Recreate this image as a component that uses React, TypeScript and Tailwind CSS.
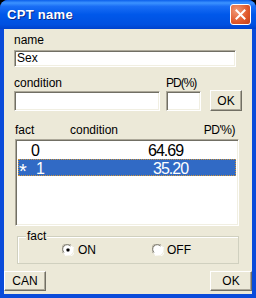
const sunken =
  "bg-white border border-t-[#ACA899] border-l-[#ACA899] border-r-white border-b-white shadow-[inset_1px_1px_0_#716F64,inset_-1px_-1px_0_#F1EFE2]";
const raised =
  "bg-[#ECE9D8] border border-t-white border-l-white border-r-[#716F64] border-b-[#716F64] shadow-[inset_-1px_-1px_0_#ACA899] flex items-center justify-center text-[12px] leading-[14px] text-black";

const Radio = ({ checked }: { checked: boolean }) => (
  <svg width="12" height="12" viewBox="0 0 12 12">
    <circle cx="6" cy="6" r="5.5" fill="white" />
    <path d="M1.2 9.2 A5.3 5.3 0 0 1 9.2 1.2" fill="none" stroke="#ACA899" strokeWidth="1" />
    <path d="M2 8.5 A4.3 4.3 0 0 1 8.5 2" fill="none" stroke="#716F64" strokeWidth="1" />
    <path d="M10.8 2.8 A5.3 5.3 0 0 1 2.8 10.8" fill="none" stroke="white" strokeWidth="1" />
    {checked && <rect x="4.5" y="4.5" width="3" height="3" rx="0.8" fill="black" />}
  </svg>
);

export default function App() {
  return (
    <div className="w-[256px] h-[298px] bg-black font-['Liberation_Sans',Arial,sans-serif]">
      <div className="flex h-full flex-col overflow-hidden rounded-t-[8px] bg-[#0A4BDA]">
        {/* title bar */}
        <div className="flex h-[29px] shrink-0 items-center justify-between bg-[linear-gradient(to_bottom,#0B5FEB_0%,#3C93FF_10%,#1A6EF5_22%,#0058EA_50%,#0050E0_85%,#0042CC_100%)]">
          <span className="pl-[7px] text-[13px] font-bold tracking-[0.3px] text-white [text-shadow:1px_1px_0_#0A2A8A]">
            CPT name
          </span>
          <div className="mr-[5px] flex h-[21px] w-[21px] items-center justify-center rounded-[3px] border border-white bg-[radial-gradient(circle_at_30%_30%,#F19A78,#E0582A_60%,#C2401A)]">
            <svg width="11" height="11" viewBox="0 0 11 11">
              <path d="M1.5 1.5 L9.5 9.5 M9.5 1.5 L1.5 9.5" stroke="white" strokeWidth="2" strokeLinecap="square" />
            </svg>
          </div>
        </div>

        {/* client */}
        <div className="mx-[4px] mb-[4px] flex flex-1 flex-col bg-[#ECE9D8] text-[12px] leading-[14px] text-black">
          <div className="ml-[10px] mt-[4px] h-[14px]">name</div>
          <div className={`${sunken} ml-[10px] mt-[3px] h-[17px] w-[222px] pl-[2px] text-[12px] leading-[15px]`}>
            Sex
          </div>

          <div className="ml-[10px] mt-[9px] flex h-[14px]">
            <span className="w-[152px]">condition</span>
            <span className="tracking-[-1px]">PD(%)</span>
          </div>
          <div className="ml-[10px] flex h-[21px] items-start">
            <div className={`${sunken} mt-[1px] h-[20px] w-[146px]`} />
            <div className={`${sunken} ml-[6px] mt-[1px] h-[20px] w-[35px]`} />
            <button className={`${raised} ml-[9px] h-[21px] w-[32px]`}>OK</button>
          </div>

          <div className="ml-[11px] mt-[12px] flex h-[14px] w-[220px]">
            <span className="w-[55px]">fact</span>
            <span className="flex-1">condition</span>
            <span className="tracking-[-0.5px]">PD'%)</span>
          </div>

          <div className={`${sunken} ml-[11px] mt-[2px] h-[87px] w-[224px] p-[2px] text-[16px] leading-[17px] tracking-[-1px]`}>
            <div className="flex h-[17px]">
              <span className="w-[130px] pl-[13px]">0</span>
              <span>64.69</span>
            </div>
            <div className="flex h-[17px] border border-dotted border-[#CE953A] bg-[#316AC5] text-white">
              <span className="h-[15px] w-[17px] pt-[5px] text-[20px] leading-[12px]">*</span>
              <span className="w-[117px]">1</span>
              <span>35.20</span>
            </div>
          </div>

          <div className="relative ml-[13px] mt-[10px] flex h-[28px] w-[222px] items-center border border-[#D0D0BF] shadow-[inset_1px_1px_0_white]">
            <span className="absolute left-[8px] top-[-8px] bg-[#ECE9D8] px-[1px]">fact</span>
            <div className="ml-[44px] flex items-center">
              <Radio checked />
              <span className="ml-[4px]">ON</span>
            </div>
            <div className="ml-[56px] flex items-center">
              <Radio checked={false} />
              <span className="ml-[3px]">OFF</span>
            </div>
          </div>

          <div className="mt-[7px] flex justify-between">
            <button className={`${raised} h-[20px] w-[42px]`}>CAN</button>
            <button className={`${raised} h-[20px] w-[42px]`}>OK</button>
          </div>
        </div>
      </div>
    </div>
  );
}
